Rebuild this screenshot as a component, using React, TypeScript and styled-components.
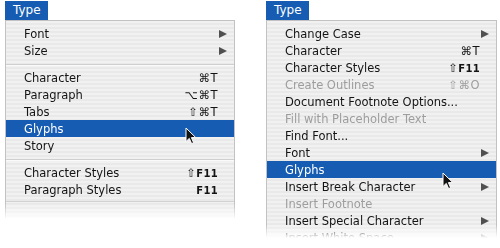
import React from "react";
import styled, { createGlobalStyle } from "styled-components";

const GlobalStyle = createGlobalStyle`
  html, body {
    margin: 0;
    padding: 0;
    background: #ffffff;
    overflow: hidden;
  }
  body {
    font-family: "DejaVu Sans", "Liberation Sans", sans-serif;
  }
`;

const Page = styled.div`
  display: flex;
  gap: 31px;
  padding: 1px 0 0 5px;
  width: 500px;
  height: 248px;
  box-sizing: border-box;
`;

const Column = styled.div<{ $width: number }>`
  width: ${(p) => p.$width}px;
  display: flex;
  flex-direction: column;
  align-items: flex-start;
`;

const MenuTitle = styled.div`
  height: 19px;
  line-height: 19px;
  padding: 0 7px 0 8px;
  background: #165cb2;
  color: #ffffff;
  font-size: 12px;
`;

const Panel = styled.div<{ $fadeFrom: number; $fadeTo: number }>`
  position: relative;
  align-self: stretch;
  box-sizing: border-box;
  padding: 4px 0 0;
  border: 1px solid #c2c2c2;
  border-bottom: none;
  box-shadow: 1px 0 1px rgba(0, 0, 0, 0.06);
  background: repeating-linear-gradient(
    to bottom,
    #f1f1f1 0px,
    #f1f1f1 2px,
    #e9e9e9 2px,
    #e9e9e9 4px
  );
  -webkit-mask-image: linear-gradient(
    to bottom,
    #000 ${(p) => p.$fadeFrom}px,
    transparent ${(p) => p.$fadeTo}px
  );
  mask-image: linear-gradient(
    to bottom,
    #000 ${(p) => p.$fadeFrom}px,
    transparent ${(p) => p.$fadeTo}px
  );
`;

const Row = styled.div<{ $active?: boolean; $disabled?: boolean }>`
  display: flex;
  align-items: center;
  justify-content: space-between;
  height: 17px;
  padding: 0 16px 0 18px;
  font-size: 11.5px;
  white-space: nowrap;
  background: ${(p) => (p.$active ? "#165cb2" : "transparent")};
  color: ${(p) => (p.$active ? "#ffffff" : p.$disabled ? "#9d9d9d" : "#141414")};
`;

const Shortcut = styled.span`
  font-size: 11.5px;
  letter-spacing: 0.5px;
`;

const FKey = styled.b`
  font-size: 10px;
  font-weight: bold;
  letter-spacing: 0.3px;
`;

const Arrow = styled.span`
  width: 0;
  height: 0;
  margin-right: -9px;
  border-top: 4.5px solid transparent;
  border-bottom: 4.5px solid transparent;
  border-left: 8px solid #505050;
`;

const Separator = styled.div`
  height: 10px;
  display: flex;
  align-items: center;
  &::after {
    content: "";
    flex: 1;
    height: 1px;
    background: #cfcfcf;
    box-shadow: 0 1px 0 #fafafa;
  }
`;

const BottomEdge = styled.div`
  height: 3px;
  border-bottom: 1px solid #d2d2d2;
  margin-bottom: 16px;
`;

const Pointer = styled.svg<{ $x: number; $y: number }>`
  position: absolute;
  left: ${(p) => p.$x}px;
  top: ${(p) => p.$y}px;
  width: 12px;
  height: 18px;
`;

type Item =
  | { sep: true }
  | {
      label: string;
      key?: React.ReactNode;
      sub?: boolean;
      active?: boolean;
      disabled?: boolean;
    };

const leftItems: Item[] = [
  { label: "Font", sub: true },
  { label: "Size", sub: true },
  { sep: true },
  { label: "Character", key: "⌘T" },
  { label: "Paragraph", key: "⌥⌘T" },
  { label: "Tabs", key: "⇧⌘T" },
  { label: "Glyphs", active: true },
  { label: "Story" },
  { sep: true },
  { label: "Character Styles", key: <>⇧<FKey>F11</FKey></> },
  { label: "Paragraph Styles", key: <FKey>F11</FKey> },
];

const rightItems: Item[] = [
  { label: "Change Case", sub: true },
  { label: "Character", key: "⌘T" },
  { label: "Character Styles", key: <>⇧<FKey>F11</FKey></> },
  { label: "Create Outlines", key: "⇧⌘O", disabled: true },
  { label: "Document Footnote Options..." },
  { label: "Fill with Placeholder Text", disabled: true },
  { label: "Find Font..." },
  { label: "Font", sub: true },
  { label: "Glyphs", active: true },
  { label: "Insert Break Character", sub: true },
  { label: "Insert Footnote", disabled: true },
  { label: "Insert Special Character", sub: true },
  { label: "Insert White Space", sub: true },
];

const Cursor: React.FC<{ x: number; y: number }> = ({ x, y }) => (
  <Pointer $x={x} $y={y} viewBox="0 0 12 18">
    <path
      d="M1 1 L1 14.5 L4.3 11.4 L6.6 16.6 L8.6 15.7 L6.4 10.6 L10.8 10.6 Z"
      fill="#111"
      stroke="#fff"
      strokeWidth="1"
      strokeLinejoin="round"
    />
  </Pointer>
);

const Menu: React.FC<{
  items: Item[];
  width: number;
  fadeFrom: number;
  fadeTo: number;
  edge?: boolean;
  cursor: { x: number; y: number };
}> = ({ items, width, fadeFrom, fadeTo, edge, cursor }) => (
  <Column $width={width}>
    <MenuTitle>Type</MenuTitle>
    <Panel $fadeFrom={fadeFrom} $fadeTo={fadeTo}>
      {items.map((it, i) =>
        "sep" in it ? (
          <Separator key={i} />
        ) : (
          <Row key={i} $active={it.active} $disabled={it.disabled}>
            <span>{it.label}</span>
            {it.sub ? <Arrow /> : it.key ? <Shortcut>{it.key}</Shortcut> : null}
          </Row>
        )
      )}
      {edge && <BottomEdge />}
      <Cursor x={cursor.x} y={cursor.y} />
    </Panel>
  </Column>
);

export default function App() {
  return (
    <>
      <GlobalStyle />
      <Page>
        <Menu
          items={leftItems}
          width={230}
          fadeFrom={184}
          fadeTo={200}
          edge
          cursor={{ x: 179, y: 106 }}
        />
        <Menu
          items={rightItems}
          width={231}
          fadeFrom={205}
          fadeTo={218}
          cursor={{ x: 175, y: 151 }}
        />
      </Page>
    </>
  );
}
